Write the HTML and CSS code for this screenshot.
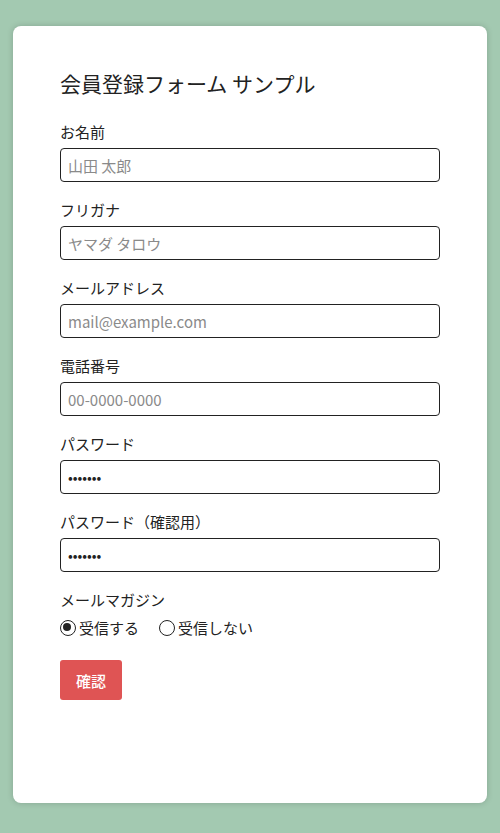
FILE: index.html
```html
<!DOCTYPE html>
<html lang="ja">
<head>
<meta charset="utf-8">
<title>会員登録フォーム サンプル</title>
<link rel="stylesheet" href="styles.css">
</head>
<body>
<main class="card">
  <h1 class="title">会員登録フォーム サンプル</h1>
  <form class="form">
    <div class="group">
      <label class="label" for="name">お名前</label>
      <input class="input" id="name" type="text" placeholder="山田 太郎">
    </div>
    <div class="group">
      <label class="label" for="kana">フリガナ</label>
      <input class="input" id="kana" type="text" placeholder="ヤマダ タロウ">
    </div>
    <div class="group">
      <label class="label" for="mail">メールアドレス</label>
      <input class="input" id="mail" type="email" placeholder="mail@example.com">
    </div>
    <div class="group">
      <label class="label" for="tel">電話番号</label>
      <input class="input" id="tel" type="tel" placeholder="00-0000-0000">
    </div>
    <div class="group">
      <label class="label" for="pw">パスワード</label>
      <input class="input" id="pw" type="password" value="1234567">
    </div>
    <div class="group">
      <label class="label" for="pw2">パスワード（確認用）</label>
      <input class="input" id="pw2" type="password" value="1234567">
    </div>
    <div class="group group-radio">
      <span class="label">メールマガジン</span>
      <div class="radios">
        <label class="radio"><input type="radio" name="mm" checked><span>受信する</span></label>
        <label class="radio"><input type="radio" name="mm"><span>受信しない</span></label>
      </div>
    </div>
    <button class="btn" type="button">確認</button>
  </form>
</main>
</body>
</html>
```
FILE: styles.css
```css
html, body {
  margin: 0;
  padding: 0;
}
body {
  background: #a3c9b1;
  font-family: "Noto Sans CJK JP", "Noto Sans", sans-serif;
  color: #222;
  padding: 26px 13px 30px;
}
.card {
  box-sizing: border-box;
  height: 777px;
  background: #fff;
  border-radius: 8px;
  box-shadow: 0 0 6px rgba(0, 0, 0, 0.18);
  padding: 42px 47px 40px;
}
.title {
  margin: 0 0 23px;
  font-size: 21px;
  font-weight: 400;
  line-height: 30px;
  color: #222;
}
.form {
  display: flex;
  flex-direction: column;
}
.group {
  display: flex;
  flex-direction: column;
  margin-bottom: 17px;
}
.label {
  font-size: 15px;
  line-height: 22px;
  margin-bottom: 5px;
  color: #222;
}
.input {
  box-sizing: border-box;
  height: 34px;
  width: 100%;
  border: 1px solid #222;
  border-radius: 4px;
  padding: 0 7px;
  font-family: "Noto Sans CJK JP", "Noto Sans", sans-serif;
  font-size: 15px;
  color: #222;
  background: #fff;
  outline: none;
}
.input::placeholder {
  color: #8a8a8a;
}
.input[type="password"] {
  font-size: 14px;
}
.group-radio {
  margin-bottom: 20px;
}
.group-radio .label {
  margin-bottom: 5px;
}
.radios {
  display: flex;
  gap: 20px;
}
.radio {
  display: flex;
  align-items: center;
  font-size: 15px;
  line-height: 24px;
  color: #222;
}
.radio input {
  appearance: none;
  -webkit-appearance: none;
  box-sizing: border-box;
  width: 16px;
  height: 16px;
  margin: 0 3px 0 0;
  border: 1.6px solid #222;
  border-radius: 50%;
  background: #fff;
  position: relative;
}
.radio input:checked::after {
  content: "";
  position: absolute;
  left: 2.4px;
  top: 2.4px;
  width: 8px;
  height: 8px;
  border-radius: 50%;
  background: #222;
}
.btn {
  align-self: flex-start;
  width: 62px;
  height: 40px;
  border: none;
  border-radius: 3px;
  background: #df5454;
  color: #fff;
  font-family: "Noto Sans CJK JP", "Noto Sans", sans-serif;
  font-size: 15px;
  font-weight: 500;
  padding: 0;
}
```
